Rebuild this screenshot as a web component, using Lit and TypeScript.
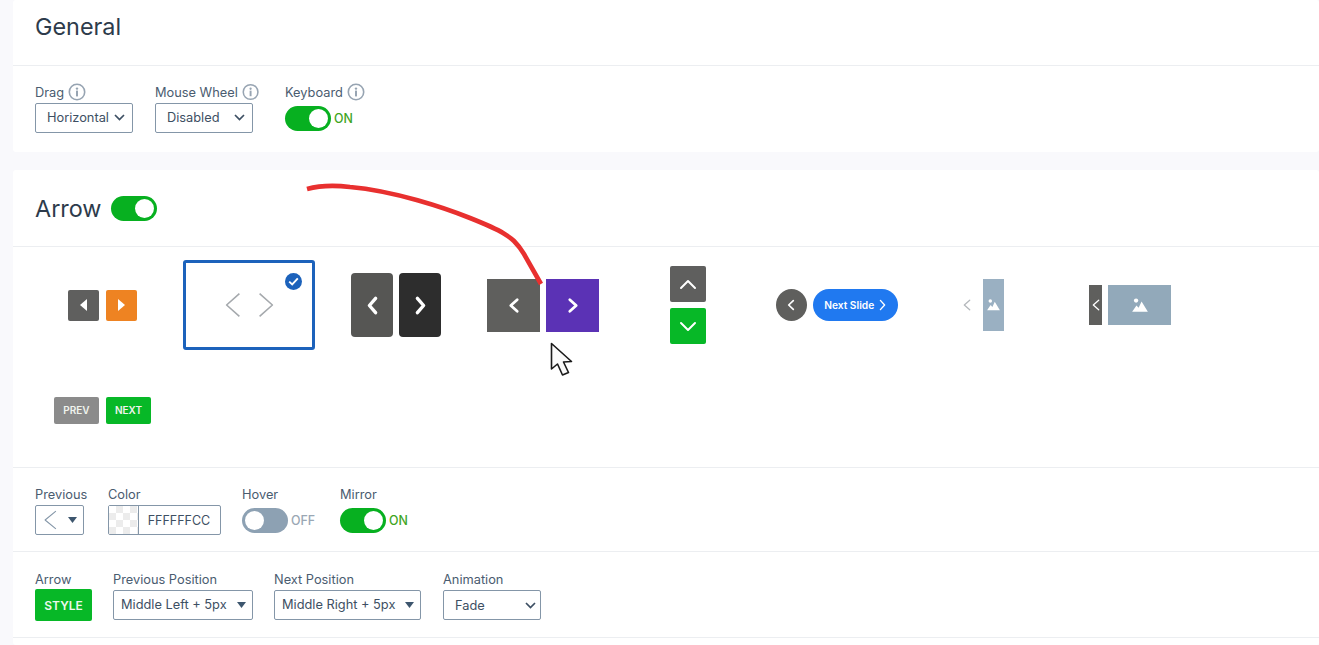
import { LitElement, html, css, svg } from "lit";
import { customElement } from "lit/decorators.js";

const info = html`<svg class="info" width="18" height="18" viewBox="0 0 18 18"><circle cx="9" cy="9" r="7.7" fill="none" stroke="#97a4b2" stroke-width="1.6"/><circle cx="9" cy="5.6" r="1.2" fill="#97a4b2"/><rect x="8" y="7.6" width="2" height="5.8" fill="#97a4b2"/></svg>`;
const chevron = html`<svg class="caret" width="11" height="7" viewBox="0 0 11 7"><path d="M1 1l4.5 4.5L10 1" fill="none" stroke="#3d4f63" stroke-width="1.7"/></svg>`;
const tri = html`<svg class="caret" width="9" height="6" viewBox="0 0 9 6"><path d="M0 0h9L4.5 6z" fill="#3d566e"/></svg>`;

/* chevron pointing left/right/up/down, drawn in a w×h box */
const chev = (dir: string, w: number, h: number, sw: number, color = "#fff", cap = "round") => {
  const d =
    dir === "l" ? `M${w - sw} ${sw}L${sw} ${h / 2}L${w - sw} ${h - sw}` :
    dir === "r" ? `M${sw} ${sw}L${w - sw} ${h / 2}L${sw} ${h - sw}` :
    dir === "u" ? `M${sw} ${h - sw}L${w / 2} ${sw}L${w - sw} ${h - sw}` :
                  `M${sw} ${sw}L${w / 2} ${h - sw}L${w - sw} ${sw}`;
  return html`<svg width=${w} height=${h} viewBox="0 0 ${w} ${h}"><path d=${d} fill="none" stroke=${color} stroke-width=${sw} stroke-linecap=${cap} stroke-linejoin="round"/></svg>`;
};
const picture = (w: number) => html`<svg width=${w} height=${w * 0.86} viewBox="0 0 16 14"><circle cx="4" cy="2.6" r="2.2" fill="#fff"/><path d="M0 14l4.4-6.4 2.2 2.4L9.6 3.5 16 14z" fill="#fff"/></svg>`;

@customElement("app-root")
export class AppRoot extends LitElement {
  static styles = css`
    :host { display: block; height: 645px; position: relative; overflow: hidden; background: #f9f9fc;
      font-family: Inter, "Liberation Sans", sans-serif; color: #4a5c70; font-size: 12.8px; }
    .card { margin-left: 13px; background: #fff; border-radius: 3px; }
    .card.first { height: 152px; }
    .card.second { margin-top: 18px; height: 475px; }
    .head { display: flex; align-items: center; gap: 10px; padding-left: 22px; border-bottom: 1px solid #eceef1;
      font-size: 23.4px; color: #2d3b4b; box-sizing: border-box; }
    .first .head { height: 66px; padding-bottom: 12px; }
    .second .head { height: 77px; }
    .row { display: flex; padding-left: 22px; box-sizing: border-box; border-bottom: 1px solid #eceef1; }
    .row.general { border-bottom: 0; padding-top: 18px; }
    .row.r3 { height: 84px; padding-top: 18px; }
    .row.r4 { height: 86px; padding-top: 19px; }
    .field { display: flex; flex-direction: column; }
    .label { height: 19px; line-height: 18px; white-space: nowrap; display: flex; align-items: flex-start; gap: 4px; color: #4a5c70; }
    .label .info { margin-top: -1px; }
    .select { height: 30px; box-sizing: border-box; border: 1.5px solid #8496a8; border-radius: 2px; display: flex; align-items: center;
      justify-content: space-between; padding: 0 7px 1px 11px; color: #3d4f63; background: #fff; white-space: nowrap; }
    .r4 .select { padding: 0 6px 1px 7px; }
    .r4 .anim { padding: 0 4px 0 11px; }
    .w98 { width: 98px; }
    .toggleline { display: flex; align-items: center; gap: 3px; height: 30px; font-size: 12.4px; font-weight: 500; color: #3fa51f; }
    .toggleline.off { color: #9aa7b4; }
    .toggle { width: 46px; height: 25px; border-radius: 13px; background: #07b020; position: relative; flex: none; }
    .toggle::after { content: ""; position: absolute; top: 3px; right: 3px; width: 19px; height: 19px; border-radius: 50%; background: #fff; }
    .toggle.off { background: #8da1b3; }
    .toggle.off::after { right: auto; left: 3px; }
    .grid { display: grid; grid-template-columns: repeat(8, 132px); grid-auto-rows: 90px; column-gap: 14.85px; row-gap: 15px;
      padding: 13px 0 12px 23.5px; border-bottom: 1px solid #eceef1; height: 221px; box-sizing: border-box; }
    .cell { display: flex; align-items: center; justify-content: center; border-radius: 3px; position: relative; }
    .cell.selected { border: 3px solid #1c62bb; box-sizing: border-box; gap: 17px; }
    .badge { position: absolute; top: 10px; right: 10px; width: 17px; height: 17px; border-radius: 50%; background: #1c62bb; display: flex; align-items: center; justify-content: center; }
    .btn { display: flex; align-items: center; justify-content: center; flex: none; }
    .g7 { gap: 7px; }
    .g6 { gap: 6px; }
    .a1 { width: 31px; height: 31px; border-radius: 2px; }
    .grey { background: #5f5f5e; }
    .orange { background: #ee8322; }
    .a3 { width: 42px; height: 64px; border-radius: 4px; }
    .grey2 { background: #565654; }
    .dark { background: #2d2d2d; }
    .a4 { width: 53px; height: 53px; }
    .a4.l { background: #5f5f5d; }
    .a4.r { background: #5b32b5; }
    .col { flex-direction: column; gap: 6px; margin-right: 3.5px; }
    .a5 { width: 36px; height: 36px; border-radius: 2px; }
    .green { background: #07b827; }
    .round { width: 31px; height: 32px; border-radius: 50%; background: #5f5f5d; }
    .pill { width: 85px; height: 32px; border-radius: 16px; background: #2079f0; color: #fff; font-size: 10.2px; font-weight: 600; gap: 5px; white-space: nowrap; margin-left: 6px; }
    .thumb1 { width: 21px; height: 52px; background: #9ab0c2; margin-left: 12px; }
    .bar { width: 13px; height: 40px; background: #5f5f5d; }
    .thumb2 { width: 63px; height: 40px; background: #92a9ba; margin-left: 6px; }
    .tbtn { width: 45px; height: 27px; border-radius: 2px; color: #f0f4ee; font-size: 10px; font-weight: 600; }
    .tgrey { background: #8b8b8b; }
    .color { width: 113px; height: 30px; box-sizing: border-box; border: 1.5px solid #8496a8; border-radius: 2px; display: flex; color: #3d4f63; font-size: 12.5px; }
    .swatch { width: 29px; flex: none; border-right: 1.5px solid #8496a8;
      background: repeating-conic-gradient(#ececec 0 25%, #fff 0 50%) 0 0 / 14px 14px; }
    .hex { flex: 1; display: flex; align-items: center; justify-content: center; padding-right: 1px; }
    .style { width: 57px; height: 32px; border-radius: 2px; background: #07b827; color: #eef8ee; font-size: 12px; font-weight: 600; display: flex; align-items: center; justify-content: center; margin-top: -1px; }
    .prev { width: 49px; }
    .r3 .prev { padding: 0 6px 0 8px; }
    .f22 { margin-right: 22px; }
    .f21 { margin-right: 21px; }
    .w140 { width: 140px; }
    .w147 { width: 147px; }
    .drag { width: 98px; }
    .wheel { width: 104px; margin-right: 26px; }
    .prevfield { width: 52px; }
    .hover { width: 73px; margin-right: 25px; }
    .overlay { position: absolute; left: 0; top: 0; pointer-events: none; }
  `;

  render() {
    return html`
      <div class="card first">
        <div class="head">General</div>
        <div class="row general">
          <div class="field drag f22">
            <div class="label">Drag ${info}</div>
            <div class="select w98">Horizontal ${chevron}</div>
          </div>
          <div class="field wheel">
            <div class="label">Mouse Wheel ${info}</div>
            <div class="select w98">Disabled ${chevron}</div>
          </div>
          <div class="field">
            <div class="label">Keyboard ${info}</div>
            <div class="toggleline"><div class="toggle"></div>ON</div>
          </div>
        </div>
      </div>

      <div class="card second">
        <div class="head">Arrow <div class="toggle"></div></div>

        <div class="grid">
          <div class="cell g7">
            <div class="btn a1 grey"><svg width="7" height="12" viewBox="0 0 7 12"><path d="M7 0v12L0 6z" fill="#fff"/></svg></div>
            <div class="btn a1 orange"><svg width="7" height="12" viewBox="0 0 7 12"><path d="M0 0v12l7-6z" fill="#fff"/></svg></div>
          </div>
          <div class="cell selected">
            ${chev("l", 16, 26, 1.6, "#a5a9ad", "butt")}
            ${chev("r", 16, 26, 1.6, "#a5a9ad", "butt")}
            <div class="badge"><svg width="11" height="9" viewBox="0 0 11 9"><path d="M1.2 4.6l3 2.8 5.6-6" fill="none" stroke="#fff" stroke-width="1.9"/></svg></div>
          </div>
          <div class="cell g6">
            <div class="btn a3 grey2">${chev("l", 13, 21, 3.4)}</div>
            <div class="btn a3 dark">${chev("r", 13, 21, 3.4)}</div>
          </div>
          <div class="cell g6">
            <div class="btn a4 l">${chev("l", 12, 17, 2.8)}</div>
            <div class="btn a4 r">${chev("r", 12, 17, 2.8)}</div>
          </div>
          <div class="cell col">
            <div class="btn a5 grey">${chev("u", 18, 11, 2)}</div>
            <div class="btn a5 green">${chev("d", 18, 11, 2)}</div>
          </div>
          <div class="cell">
            <div class="btn round">${chev("l", 8, 12, 1.7)}</div>
            <div class="btn pill">Next Slide ${chev("r", 7, 12, 1.4)}</div>
          </div>
          <div class="cell">
            ${chev("l", 8, 12, 1.3, "#b4b8bc")}
            <div class="btn thumb1">${picture(13)}</div>
          </div>
          <div class="cell">
            <div class="btn bar">${chev("l", 8, 12, 1.3)}</div>
            <div class="btn thumb2">${picture(16)}</div>
          </div>
          <div class="cell g7">
            <div class="btn tbtn tgrey">PREV</div>
            <div class="btn tbtn green">NEXT</div>
          </div>
        </div>

        <div class="row r3">
          <div class="field prevfield f21">
            <div class="label">Previous</div>
            <div class="select prev">
              ${chev("l", 13, 20, 1.1, "#8496a8", "butt")} ${tri}
            </div>
          </div>
          <div class="field f21">
            <div class="label">Color</div>
            <div class="color"><div class="swatch"></div><div class="hex">FFFFFFCC</div></div>
          </div>
          <div class="field hover">
            <div class="label">Hover</div>
            <div class="toggleline off"><div class="toggle off"></div>OFF</div>
          </div>
          <div class="field">
            <div class="label">Mirror</div>
            <div class="toggleline"><div class="toggle"></div>ON</div>
          </div>
        </div>

        <div class="row r4">
          <div class="field f21">
            <div class="label">Arrow</div>
            <div class="style">STYLE</div>
          </div>
          <div class="field f21">
            <div class="label">Previous Position</div>
            <div class="select w140">Middle Left + 5px ${tri}</div>
          </div>
          <div class="field f22">
            <div class="label">Next Position</div>
            <div class="select w147">Middle Right + 5px ${tri}</div>
          </div>
          <div class="field">
            <div class="label">Animation</div>
            <div class="select anim w98">Fade ${chevron}</div>
          </div>
        </div>
      </div>

      <svg class="overlay" width="1319" height="645" viewBox="0 0 1319 645">
        ${svg`<path d="M307 189C318 186 333 185 350 187C395 191 445 208 470 218C485 224 495 228 503 233C508 236 511 238 514 241C518 245 521 249 524 254L541 284" fill="none" stroke="#e8302f" stroke-width="4.6"/>`}
        ${svg`<path d="M551.5 343.5L551.5 369L557.5 364L562.5 375L568.5 372.5L563.5 362L571.5 361.5Z" fill="#fafafa" stroke="#1a1a1a" stroke-width="1.6" stroke-linejoin="round"/>`}
      </svg>
    `;
  }
}
